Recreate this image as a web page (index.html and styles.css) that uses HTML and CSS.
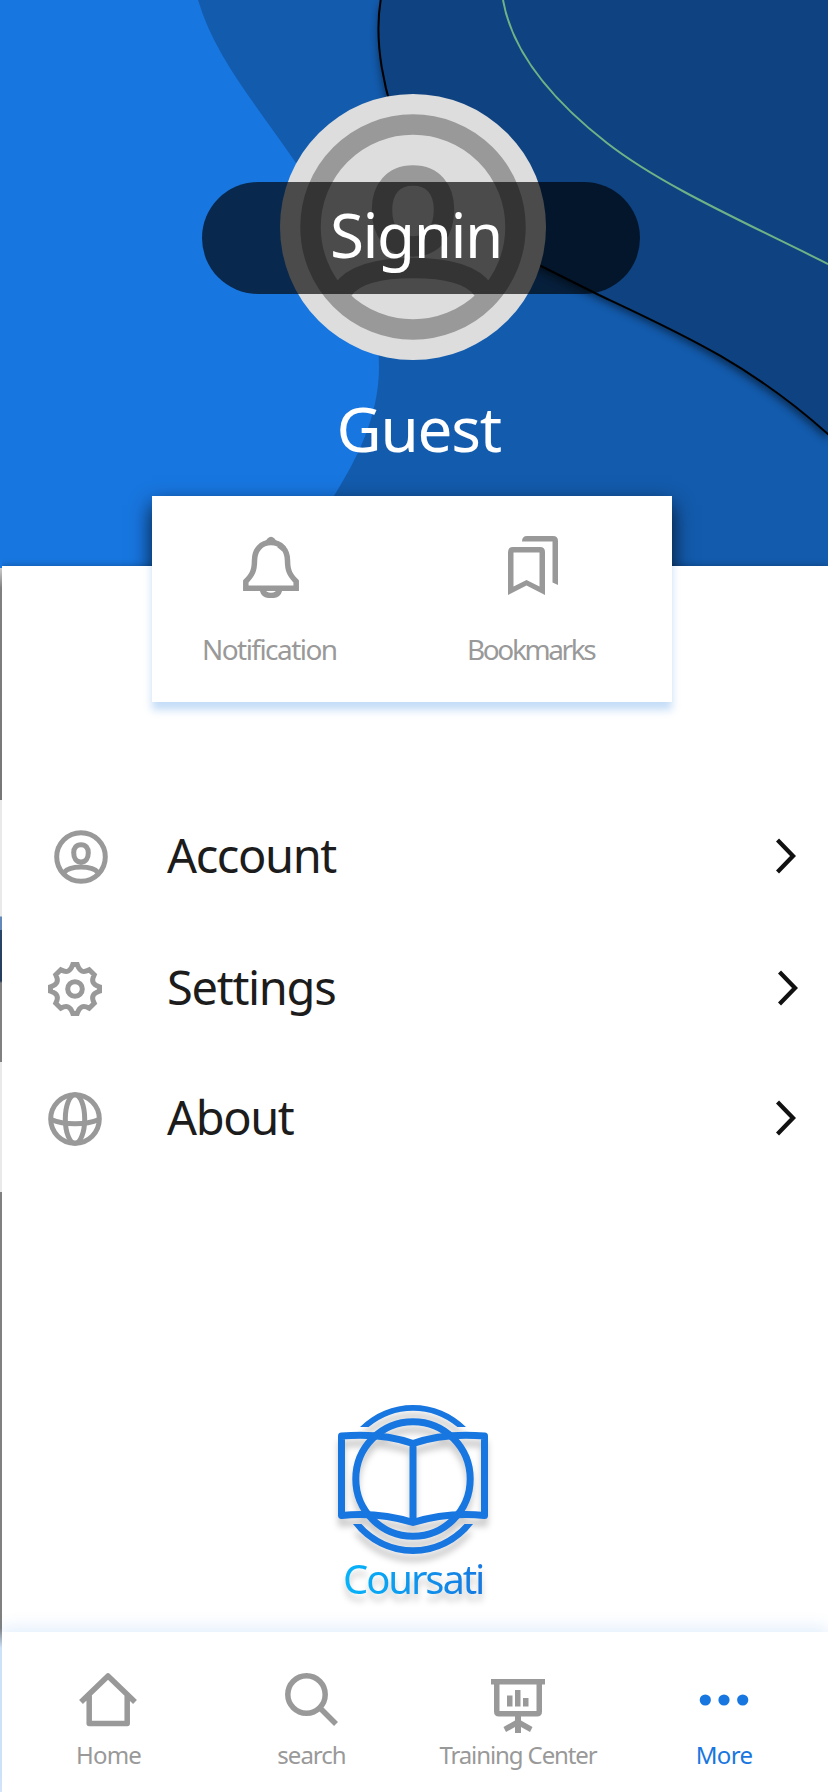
FILE: index.html
```html
<!DOCTYPE html>
<html lang="en">
<head>
<meta charset="utf-8">
<title>Coursati</title>
<link rel="stylesheet" href="styles.css">
</head>
<body>
<header class="hero">
  <svg class="hero-art" viewBox="0 0 828 566">
    <defs><filter id="soft" x="-10%" y="-10%" width="120%" height="120%"><feGaussianBlur stdDeviation="4"/></filter></defs>
    <path fill="#1876e0" d="M0 0H198C215 57 255 103 296 163C340 231 379 285 379 367C379 418 355 462 334 496L292 566H0Z"/>
    <path fill="#000" opacity=".5" filter="url(#soft)" d="M381 4C374 44 381 100 408 160C438 225 485 248 541 271L599 299C680 337 752 371 828 440V0Z"/>
    <path fill="#0e4280" stroke="#000" stroke-width="2" d="M381 -2C374 38 381 92 408 152C438 217 485 240 541 266L599 295C680 333 752 365 830 436V-2Z"/>
    <path fill="none" stroke="#6fb286" stroke-width="2" d="M503 0C512 52 552 100 607 143C661 185 740 220 828 264"/>
  </svg>
  <div class="avatar">
    <svg viewBox="0 0 266 266">
      <circle cx="133" cy="133" r="133" fill="#ddd"/>
      <g fill="none" stroke="#999" stroke-width="20.5">
        <circle cx="133" cy="133" r="102.5"/>
        <path d="M133 81.500c-20 0-31 14-31 34 0 22 11 37 31 37s31-15 31-37c0-20-11-34-31-34Z"/>
        <path d="M63 196c11-16 37-22 70-22s59 6 70 22"/>
      </g>
    </svg>
    <button class="signin">Signin</button>
  </div>
  <h1 class="user">Guest</h1>
</header>
<div class="shell">
  <main class="sheet">
    <section class="shortcuts">
      <a class="shortcut">
        <svg width="56" height="62" viewBox="0 0 56 62" fill="none" stroke="#999" stroke-width="5.500">
          <path d="M2.800 52.200V45.500C9 39 11.500 35 11.500 24.500C11.500 14 18 6.500 28 6.500S44.500 14 44.500 24.500C44.500 35 47 39 53.200 45.500V52.200Z"/>
          <path d="M19.500 54c1 4 4 5.500 8.500 5.500s7.500-1.500 8.500-5.500M36 9l5 4"/>
          <path fill="#999" stroke="none" d="M21 6Q23 5 24.500 2.500Q28-1 31.500 2.500Q33 5 35 6Z"/>
        </svg>
        <span class="notification">Notification</span>
      </a>
      <a class="shortcut marks">
        <svg width="50" height="62" viewBox="0 0 50 62" fill="#999">
          <path fill-rule="evenodd" d="M5 11H32Q37 11 37 16V59L18.500 49.500L0 59V16Q0 11 5 11ZM5.500 16.500V50.500L18.500 44L31.500 50.500V16.500Z"/>
          <path d="M14 5.500Q14 0 19 0H45Q50 0 50 5V49L44.500 46.500V5.500Z"/>
        </svg>
        <span class="bookmarks">Bookmarks</span>
      </a>
    </section>
    <nav class="menu">
      <a class="row account">
        <svg class="row-icon" viewBox="0 0 54 54" fill="none" stroke="#999" stroke-width="5">
          <circle cx="27" cy="27" r="24.300"/>
          <path d="M27 14.800c-4.800 0-7.300 3.200-7.300 8 0 5.500 2.500 9.200 7.300 9.200s7.300-3.700 7.300-9.200c0-4.800-2.500-8-7.300-8ZM10 42.500c3-4 9-5.500 17-5.500s14 1.500 17 5.500"/>
        </svg>
        <span>Account</span>
        <svg class="chevron" viewBox="0 0 20 36"><path d="M1.500 2L17 18L1.500 34"/></svg>
      </a>
      <a class="row settings">
        <svg class="row-icon" viewBox="0 0 54 54" fill="none" stroke="#999" stroke-width="5">
          <path d="M24.800 2.500H29.200C31.500 9.500 35 11 41.200 7.800L46.200 12.800C43 19 44.500 22.500 51.500 24.800V29.200C44.500 31.500 43 35 46.200 41.200L41.200 46.200C35 43 31.500 44.500 29.200 51.500H24.800C22.500 44.500 19 43 12.800 46.200L7.800 41.200C11 35 9.500 31.500 2.500 29.200V24.800C9.500 22.500 11 19 7.800 12.800L12.800 7.800C19 11 22.500 9.500 24.800 2.500Z"/>
          <circle cx="27" cy="27" r="7.300"/>
        </svg>
        <span>Settings</span>
        <svg class="chevron" viewBox="0 0 20 36"><path d="M1.500 2L17 18L1.500 34"/></svg>
      </a>
      <a class="row about">
        <svg class="row-icon" viewBox="0 0 54 54" fill="none" stroke="#999" stroke-width="5">
          <circle cx="27" cy="27" r="24.300"/>
          <ellipse cx="27" cy="27" rx="9.700" ry="24.300"/>
          <path d="M3 27.500Q13 31.800 27 31.800T51 27.500"/>
        </svg>
        <span>About</span>
        <svg class="chevron" viewBox="0 0 20 36"><path d="M1.500 2L17 18L1.500 34"/></svg>
      </a>
    </nav>
    <div class="brand">
      <svg class="brand-mark" viewBox="0 0 150 150" fill="none" stroke="#1876e0" stroke-width="7" stroke-linejoin="round">
        <path fill="#1876e0" stroke="none" d="M22 23A75 75 0 0 1 128 23H119.400A68.500 68.500 0 0 0 30.600 23ZM15 120A75 75 0 0 0 135 120H126.500A68.500 68.500 0 0 1 23.500 120Z"/>
        <circle cx="75" cy="75" r="57.200"/>
        <path d="M3.500 32C28 30 51 31 75 39.500C99 31 122 30 146.500 32V111.500C122 109 99 111 75 118.500C51 111 28 109 3.500 111.500ZM75 40V118"/>
      </svg>
      <div class="brand-name">Coursati</div>
    </div>
  </main>
  <nav class="tabs">
    <a class="tab">
      <svg class="home-icon" width="58" height="60" viewBox="0 0 58 60" fill="none" stroke="#999" stroke-width="5.500" stroke-linejoin="round">
        <path d="M2 29L29 3L56 29M10.200 22V50.500H48.200V22"/>
      </svg>
      <span class="home">Home</span>
    </a>
    <a class="tab find">
      <svg width="54" height="60" viewBox="0 0 54 60" fill="none" stroke="#999" stroke-width="5.500">
        <circle cx="21.500" cy="21.500" r="18.700"/><path d="M34.500 34.500L51 51"/>
      </svg>
      <span class="search">search</span>
    </a>
    <a class="tab training">
      <svg width="54" height="60" viewBox="0 0 54 60" fill="#999">
        <path fill-rule="evenodd" d="M0 6H54V11.500H51V38.500Q51 43.500 46 43.500H30V47.500L41.500 54L39 59L30 54V60H24V54L15 59L12.500 54L24 47.500V43.500H8Q3 43.500 3 38.500V11.500H0ZM8.500 11.500V38H45.500V11.500Z"/>
        <path d="M16 22.500H21.500V33.500H16ZM24 17H29.500V33.500H24ZM32 25H37.500V33.500H32Z"/>
      </svg>
      <span class="center">Training Center</span>
    </a>
    <a class="tab active">
      <svg width="50" height="60" viewBox="0 0 50 60" fill="#1876e0">
        <circle cx="6.300" cy="27" r="5.600"/><circle cx="25" cy="27" r="5.600"/><circle cx="43.700" cy="27" r="5.600"/>
      </svg>
      <span class="more">More</span>
    </a>
  </nav>
</div>
</body>
</html>
```
FILE: styles.css
```css
* { box-sizing: border-box; }
body {
  margin: 0;
  width: 828px;
  height: 1792px;
  overflow: hidden;
  background: #fff;
  font-family: "Noto Sans", "Open Sans", sans-serif;
}
svg { display: block; flex: none; }
.hero {
  position: relative;
  height: 566px;
  overflow: hidden;
  padding-top: 94px;
  background: #135bad;
}
.hero-art { position: absolute; inset: 0; width: 828px; height: 566px; }
/* shadow cast on the artwork by the shortcut card */
.hero::after {
  content: "";
  position: absolute;
  left: 152px;
  top: 496px;
  width: 520px;
  height: 206px;
  box-shadow: 0 9px 20px rgba(0, 0, 0, .8);
}
.avatar { position: relative; width: 266px; height: 266px; margin-left: 280px; }
.signin {
  position: absolute;
  left: -78px;
  top: 88px;
  width: 438px;
  height: 112px;
  border: 0;
  border-radius: 56px;
  padding: 0 0 8px 128px;
  background: rgba(0, 0, 0, .66);
  color: #fff;
  font: 400 62px/104px "Noto Sans", sans-serif;
  letter-spacing: -1.5px;
  text-align: left;
}
.user {
  position: relative;
  margin: 28px 0 0 336.5px;
  color: #fff;
  font-size: 62px;
  font-weight: 400;
  line-height: 80px;
  letter-spacing: -1.2px;
}
.shell {
  display: flex;
  flex-direction: column;
  height: 1226px;
  padding-left: 2px;
  background: linear-gradient(#1876e0 2px, #ccc 2px, #808080 22px, #777 234px, #e9e9e9 234px 350px, #6288b8 351px 364px, #29456a 364px, #263d5c 415px, #808080 417px 496px, #e9e9e9 496px 626px, #808080 626px 1062px, #d9e8fb 1082px);
}
.sheet {
  flex: 1;
  background: #fff;
  box-shadow: 0 0 7px rgba(0, 0, 0, .3);
  clip-path: inset(-70px 0 0 0);
}
.shortcuts {
  position: relative;
  display: flex;
  width: 520px;
  height: 206px;
  margin: -70px 0 0 150px;
  padding-top: 40px;
  background: #fff;
  box-shadow: 0 8px 8px rgba(24, 118, 224, .25);
  clip-path: polygon(0 0, 520px 0, 520px 70px, 550px 70px, 550px 240px, -30px 240px, -30px 70px, 0 70px);
}
.shortcut {
  width: 264px;
  padding-left: 91px;
  color: #999;
  font-size: 28px;
  line-height: 40px;
}
.shortcut svg { height: 62px; }
.shortcut span { display: block; margin-top: 31px; white-space: nowrap; }
.marks { width: 256px; padding-left: 92px; }
.notification { margin-left: -41px; letter-spacing: -1.55px; }
.bookmarks { margin-left: -41px; letter-spacing: -2.4px; }
.menu { padding-top: 89px; }
.row {
  display: flex;
  align-items: center;
  height: 132px;
  padding: 0 32px 0 46px;
  color: #1c1c1c;
  font-size: 47px;
  line-height: 64px;
}
.row-icon { width: 54px; height: 54px; }
.row span { flex: 1; margin: -4px 0 0 65px; letter-spacing: -1.4px; }
.account { padding-left: 52px; }
.account span { margin-left: 59px; }
.settings { padding-right: 30px; }
.settings span { letter-spacing: -1.3px; }
.about { height: 128px; }
.chevron {
  width: 20px;
  height: 36px;
  margin-top: -2px;
  fill: none;
  stroke: #111;
  stroke-width: 4.3;
}
.brand { width: 150px; margin: 221px 0 0 336px; }
.brand-mark { width: 150px; height: 150px; overflow: visible; filter: drop-shadow(0 8px 3px rgba(0, 0, 0, .2)); }
.brand-name {
  margin-left: 5px;
  font-size: 40px;
  line-height: 50px;
  letter-spacing: -2.1px;
  color: transparent;
  background: linear-gradient(90deg, #05b4fa, #1876e0);
  background-clip: text;
  -webkit-background-clip: text;
  filter: drop-shadow(0 7px 3px rgba(0, 0, 0, .2));
}
.tabs {
  position: relative;
  display: flex;
  height: 160px;
  padding: 41px 0 0 6px;
  background: #fff;
  box-shadow: 0 -4px 16px rgba(24, 118, 224, .13);
}
.tab {
  display: flex;
  flex-direction: column;
  align-items: center;
  width: 201px;
  color: #999;
  font-size: 24px;
  line-height: 34px;
}
.tab span { margin-top: 5px; white-space: nowrap; }
.home-icon { margin-right: 1px; }
.home { letter-spacing: -.8px; }
.find { width: 205px; }
.search { letter-spacing: -1px; }
.training { width: 208px; }
.center { letter-spacing: -1.1px; }
.active { width: 204px; color: #1876e0; }
.more { letter-spacing: -.7px; }
```
